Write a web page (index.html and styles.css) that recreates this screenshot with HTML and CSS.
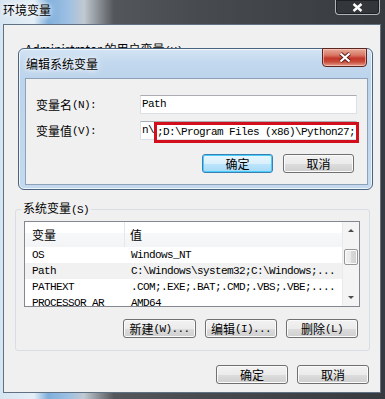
FILE: index.html
```html
<!DOCTYPE html>
<html lang="zh-CN">

<head>
    <meta charset="UTF-8">
    <meta name="viewport" content="width=device-width, initial-scale=1.0">
    <title>环境变量</title>
    <link rel="stylesheet" href="styles.css">
</head>

<body>
    <div class="screen">
        <div class="caption">环境变量</div>
        <div class="sys-close">
            <svg width="11" height="9" viewBox="0 0 11 9">
                <path d="M1.5 1 L9.5 8 M9.5 1 L1.5 8" stroke="#fff" stroke-width="2.4" />
            </svg>
        </div>

        <div class="window">
            <div class="user-group">Administrator 的用户变量<span class="m">(U)</span></div>

            <fieldset class="group">
                <legend>系统变量<span class="m">(S)</span></legend>
                <div class="list">
                    <div class="list-body">
                        <div class="list-head">
                            <div class="col-a">变量</div>
                            <div class="col-b">值</div>
                        </div>
                        <div class="row m">
                            <div class="col-a">OS</div>
                            <div class="col-b">Windows_NT</div>
                        </div>
                        <div class="row m hot">
                            <div class="col-a">Path</div>
                            <div class="col-b">C:\Windows\system32;C:\Windows;...</div>
                        </div>
                        <div class="row m">
                            <div class="col-a">PATHEXT</div>
                            <div class="col-b">.COM;.EXE;.BAT;.CMD;.VBS;.VBE;....</div>
                        </div>
                        <div class="row m">
                            <div class="col-a">PROCESSOR_AR</div>
                            <div class="col-b">AMD64</div>
                        </div>
                    </div>
                    <div class="vscroll">
                        <div class="arrow up"></div>
                        <div class="thumb"></div>
                        <div class="arrow down"></div>
                    </div>
                </div>
                <div class="btn-row">
                    <div class="btn wide">新建<span class="m">(W)...</span></div>
                    <div class="btn">编辑<span class="m">(I)...</span></div>
                    <div class="btn">删除<span class="m">(L)</span></div>
                </div>
            </fieldset>

            <div class="btn-row footer">
                <div class="btn">确定</div>
                <div class="btn">取消</div>
            </div>
        </div>

        <!-- 编辑系统变量 弹窗 -->
        <div class="dialog">
            <div class="dialog-title">编辑系统变量</div>
            <div class="dialog-close">
                <svg width="14" height="11" viewBox="0 0 14 11">
                    <path d="M2.5 1.5 L11.5 9.5 M11.5 1.5 L2.5 9.5" stroke="#5a1d18" stroke-width="4" />
                    <path d="M2.5 1.5 L11.5 9.5 M11.5 1.5 L2.5 9.5" stroke="#fff" stroke-width="2.2" />
                </svg>
            </div>
            <div class="dialog-client">
                <div class="form">
                    <div class="label">变量名<span class="m">(N):</span></div>
                    <div class="field m">Path</div>
                    <div class="label">变量值<span class="m">(V):</span></div>
                    <div class="field m">n\<span class="mark">;D:\Program Files (x86)\Python27;</span></div>
                </div>
                <div class="btn-row dlg-btns">
                    <div class="btn default">确定</div>
                    <div class="btn">取消</div>
                </div>
            </div>
        </div>
    </div>
</body>

</html>
```

FILE: styles.css
```css
* {
    box-sizing: border-box;
}

body {
    margin: 0;
    width: 385px;
    height: 399px;
    overflow: hidden;
    font-family: "Noto Sans CJK SC", sans-serif;
    font-size: 12px;
    line-height: 14px;
    color: #000;
}

.m {
    font-family: "Liberation Mono", monospace;
    font-size: 11px;
    letter-spacing: -0.6px;
}

.screen {
    position: relative;
    height: 399px;
    padding: 0 4px 6px 3px;
    display: flex;
    flex-direction: column;
    background: linear-gradient(90deg, #d6e5f2 0px, #e4eef6 34px, #80afdc 48px, #9dc0e2 68px, #c0c9d1 84px, #858a90 100px, #53575c 114px, #474b50 200px, #3e4146 300px, #373a3e 385px);
}

.caption {
    height: 24px;
    padding: 2px 0 0 0;
    line-height: 16px;
    text-shadow: 0 0 4px #fff, 0 0 8px #fff;
}

.sys-close {
    position: absolute;
    top: 0;
    right: 5px;
    width: 45px;
    height: 15px;
    border: 1px solid rgba(220, 225, 230, 0.75);
    border-top: none;
    border-radius: 0 0 4px 4px;
    background: rgba(40, 44, 48, 0.35);
    box-shadow: inset 0 0 0 1px rgba(0, 0, 0, 0.4);
    display: flex;
    justify-content: center;
    align-items: center;
}

.window {
    flex: 1;
    background: #f0f0f0;
    border: 1px solid #5f7183;
    display: flex;
    flex-direction: column;
}

.user-group {
    height: 176px;
    padding: 17px 0 0 21px;
}

.group {
    margin: 0 10px 0 11px;
    border: 1px solid #d5dfe5;
    border-radius: 3px;
    padding: 4px 9px 12px 8px;
    min-width: 0;
}

.group legend {
    padding: 0 2px;
    margin-left: -3px;
    line-height: 14px;
}

.list {
    height: 86px;
    border: 1px solid #828790;
    background: #fff;
    display: flex;
}

.list-body {
    flex: 1;
    overflow: hidden;
}

.list-head {
    display: flex;
    height: 25px;
    align-items: stretch;
    background: linear-gradient(#ffffff 0%, #ffffff 45%, #f7f8f9 46%, #f3f4f6 100%);
}

.list-head div {
    display: flex;
    align-items: center;
}

.list-head .col-a {
    width: 100px;
    padding-left: 7px;
    border-right: 1px solid #e3e8ee;
}

.list-head .col-b {
    padding-left: 5px;
}

.row {
    display: flex;
    height: 16px;
    line-height: 16px;
    white-space: nowrap;
}

.row .col-a {
    width: 101px;
    padding-left: 7px;
}

.row .col-b {
    padding-left: 5px;
}

.hot {
    background: #f1f1f1;
}

.vscroll {
    width: 17px;
    background: #f4f4f4;
    border-left: 1px solid #eaeaea;
    display: flex;
    flex-direction: column;
    align-items: center;
}

.arrow {
    height: 17px;
    width: 17px;
    display: flex;
    justify-content: center;
    align-items: center;
}

.arrow::after {
    content: "";
    border-left: 3px solid transparent;
    border-right: 3px solid transparent;
}

.up::after {
    border-bottom: 3px solid #4d4d4d;
}

.down {
    margin-top: auto;
}

.down::after {
    border-top: 3px solid #4d4d4d;
}

.thumb {
    margin-top: 10px;
    width: 14px;
    height: 16px;
    border: 1px solid #979797;
    border-radius: 2px;
    background: linear-gradient(90deg, #f3f3f3, #e8e8e8 50%, #d9d9d9 51%, #d0d0d0);
    box-shadow: inset 0 0 0 1px #fafafa;
}

.btn-row {
    display: flex;
    justify-content: flex-end;
    gap: 9px;
}

.group .btn-row {
    margin-top: 12px;
    padding-right: 2px;
}

.footer {
    margin-top: 14px;
    padding-right: 11px;
}

.btn {
    width: 72px;
    height: 19px;
    border: 1px solid #707070;
    border-radius: 3px;
    background: linear-gradient(#f2f2f2 0%, #ebebeb 50%, #dddddd 51%, #cfcfcf 100%);
    box-shadow: inset 0 0 0 1px #fbfbfb;
    display: flex;
    justify-content: center;
    align-items: center;
    white-space: nowrap;
}

.btn.wide {
    width: 73px;
}

.btn.default {
    border-color: #3c7fb1;
    background: linear-gradient(#eaf6fd 0%, #d9f0fc 50%, #bee6fd 51%, #a7d9f5 100%);
    box-shadow: inset 0 0 0 1px #48cefc;
}

.dialog {
    position: absolute;
    left: 18px;
    top: 48px;
    width: 355px;
    height: 142px;
    border: 1px solid #4a6480;
    border-radius: 6px;
    padding: 0 4px 4px 6px;
    display: flex;
    flex-direction: column;
    background: linear-gradient(#d3e4f4 0px, #c2d8ee 14px, #bcd4ec 29px, #c4d9ee 100%);
    box-shadow: inset 0 0 0 1px rgba(255, 255, 255, 0.7);
}

.dialog-title {
    height: 29px;
    display: flex;
    align-items: center;
    padding-left: 1px;
    text-shadow: 0 0 4px #fff, 0 0 8px #fff;
}

.dialog-close {
    position: absolute;
    top: -1px;
    right: 5px;
    width: 45px;
    height: 19px;
    border: 1px solid #5c2620;
    border-radius: 0 0 4px 4px;
    background: linear-gradient(#e8a898 0%, #d97a68 35%, #c3372a 55%, #c94a38 75%, #e3a08f 100%);
    box-shadow: inset 0 0 0 1px rgba(255, 210, 200, 0.6);
    display: flex;
    justify-content: center;
    align-items: center;
}

.dialog-client {
    flex: 1;
    background: #f0f0f0;
    border: 1px solid #8da2b8;
    padding: 16px 12px 0 10px;
}

.form {
    display: grid;
    grid-template-columns: 104px 217px;
    grid-auto-rows: 19px;
    row-gap: 7px;
}

.label {
    display: flex;
    align-items: center;
}

.field {
    border: 1px solid #dbdfe6;
    border-top-color: #abadb3;
    background: #fff;
    padding-left: 1px;
    line-height: 17px;
    white-space: nowrap;
    display: flex;
    align-items: flex-start;
}

.mark {
    display: inline-block;
    border: 3px solid #d30f1b;
    line-height: 15px;
    height: 21px;
    padding-right: 1px;
    margin-top: 0;
}

.dlg-btns {
    margin-top: 14px;
    padding-right: 1px;
    gap: 10px;
}

.dlg-btns .btn {
    width: 71px;
}
```
